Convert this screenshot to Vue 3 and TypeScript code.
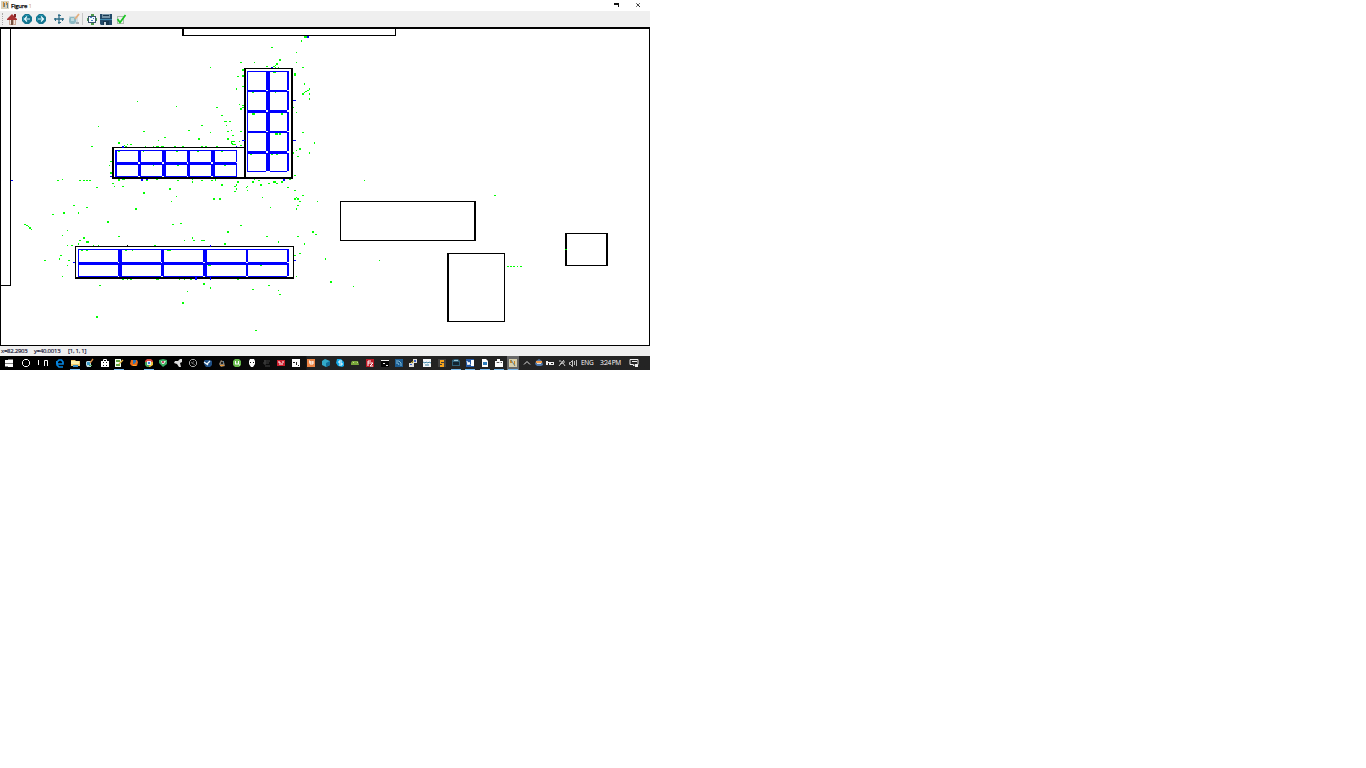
<script setup lang="ts">
interface Shape { d: string; c: string; w?: number }
interface Glyph { x: number; s: Shape[]; open?: boolean; active?: boolean }

const f = (c: string, d: string): Shape => ({ c, d })
const l = (c: string, d: string, w = 1): Shape => ({ c, d, w })

const parse = (text: string): number[][] =>
  text.trim().split(/\s+/).map((item) => {
    const [x, y, w = 1, h = 1] = item.split(',').map(Number)
    return [x, y, w, h]
  })
const toPath = (text: string): string =>
  parse(text).map(([x, y, w, h]) => `M${x} ${y}h${w}v${h}h${-w}z`).join('')

const walls = toPath(`
0,27,650,2 0,27,1,319 649,27,1,319 0,345,650,1
10,29,1,257 0,285,11,1
182,28,2,8 182,35,214,1 395,28,1,8
244,68,2,111 291,68,2,111 244,68,49,1 112,177,181,2
112,147,2,32 112,147,133,1
75,246,1,33 75,246,219,1 75,277,219,2 293,246,1,33 127,245
340,201,1,40 340,201,136,1 474,201,2,40 340,240,136,1
447,253,2,69 447,253,58,1 504,253,1,69 447,321,58,1
565,233,2,33 565,233,43,1 606,233,2,33 565,265,43,1`)

const cells = toPath(`
247,71,1,101 247,71,42,1 266,71,4,100 287,71,2,100 247,90,42,2 247,110,42,3 247,131,42,2 247,151,42,3 247,171,42,1
115,150,2,27 115,150,122,1 138,150,3,27 162,150,4,27 187,150,3,27 211,150,4,27 236,150,1,27 115,162,122,3 115,176,122,1
78,249,1,28 78,249,211,1 118,249,4,28 161,249,3,28 203,249,4,28 246,249,2,28 287,249,2,28 78,262,211,3 78,276,211,1
307,36,2,2 271,67,2,1 293,100,3,1 242,140,3,1 293,140,3,1 236,146,1,1 122,146,2,2 110,176,2,1
141,179,2,2 146,179,2,1 283,179,2,2 11,180,2,1 294,260,2,1 210,245,1,2 195,277,2,3 210,277,1,3 73,262,2,1`)

const joints = toPath(`
266,90,2,1 287,90,2,1 266,110,2,2 287,110,2,2 266,131,2,1 287,131,2,1 266,151,2,2 287,151,2,2 266,171,4,1 287,171,2,1
138,162,2,2 162,162,2,2 187,162,1,2 211,162,2,2 236,162,1,1 138,176,2,1 162,176,2,1 187,176,1,1 211,176,2,1
118,262,1,1 161,262,1,1 203,262,2,1 246,262,2,1 287,262,2,1 118,276,1,1 161,276,2,1 203,276,2,1 246,276,2,1 287,276,2,1`)

const points = toPath(`
304,36,3,2 301,40,1,2 271,47,2 296,52 279,59,2,2 240,62,2 254,62 296,62 276,63,2,2 275,65 273,66,2 266,66,2 275,67 278,67 210,67 302,67,2
242,69,2,2 273,72,3 294,73,2,3 237,76,2 242,75,2,2 304,83,1,2 242,86,2 236,88,1,2 309,88,1,2 307,90,2 305,91,2 304,92 302,93,2,2 309,93,1,2 309,98,1,2
252,92,2 275,92 239,104 242,105,2 242,107,2 240,108,2,2 293,107 296,112 216,107,2 252,113,3,2 281,113,2,2 221,115,2 224,121,3 229,121,2 201,125,2
226,125 188,130,2 227,131,2 231,130 240,131,2 210,132 302,132,2 137,101 176,106 98,126 91,146,2 143,131,2 158,140 164,137,2 118,142,2,2
127,144 130,144,2 124,145 125,146,2 145,146 153,146 156,146,3 161,146,3 174,146,2 182,146,2 201,146,2 205,146,2 216,146,2 198,138,2,2 227,138,2,2
232,135,2 231,141,1,2 232,141,3 231,143,2 232,144,4 239,141 240,145,2 314,142,1,2 309,152,1,2 299,148,2,2 293,152,1,2 296,150 297,156,2
275,133,3,2 279,133,2,2 250,154,2 271,154,2 276,154,2 221,151,2 224,165,2 294,175,2 289,179,2 211,180,2 215,179,1,2 221,184,2,2
237,181,2,2 236,184,1,2 234,186,2 236,188,1,2 234,191,2 254,179 258,180,2 252,181,2,2 260,184,2,2 247,186 246,187 247,190 268,183,2
273,181,3,2 276,183,2 281,181,2,2 287,187,2 294,190,2 302,195,2 294,198,2,2 296,197 297,198,2,2 299,201,2 297,205,2 296,208,1,2 317,201
364,180 262,197 270,207 213,198,2,2 219,198,2,2 110,161,2 109,165 110,172,2,2 118,151,2 143,151 176,151,2 197,151,2 153,165 177,165,2
57,180,2 62,179 79,180,2 83,180,2 86,180,2 89,180,2 118,179,2,2 122,179,3 146,180,2 156,179,2 112,183,2 96,187,2 114,186 122,186,2
143,192,2,2 169,188,2,2 176,196 171,201 177,180,2 192,179 192,181,1,2 201,180,2 240,225,2 227,231,2,2 297,236,2 266,236,2 278,241,1,2
304,243,1,2 312,231,2,2 315,234,2 299,253,2 294,255,2 325,258,1,2 296,276 172,224,2 180,223,2 184,240 192,237,1,2 193,240,2 201,240,4
224,243,2,2 167,250,4 208,265,3 260,265,2 179,279 184,279 190,279,2 237,279,2 203,283,2,2 210,287,1,2 187,291 182,302,2,2 252,289,2
268,285,2 278,290 279,294,2 255,330,2 135,208,2,2 107,221,2,2 118,236,2 73,205,2 86,207,2 63,212,2,2 78,212,1,2 52,214,2
24,224,2 26,225,2 28,226 29,227,2,2 31,229 67,230 62,235 83,237,2,2 79,240,2 86,241,3,2 78,243,1,2 67,245 71,245,2 93,245 98,245 154,245,2
81,250,2 86,250,2 125,250,2 132,250 44,260,2 60,255,2 59,258,1,2 68,260,2 67,265 62,276 99,285,2 96,316,2,2 122,279,2 127,279 130,279,2 156,279,3
494,195,2 379,260 330,281,2,2 353,286 507,266,2 510,266,2 513,266,2 517,266 520,266,2 565,249,2`)

const arrowDisc = (x: number, dir: string): Glyph => ({
  x,
  s: [f('#14758f', 'M4 1h4l3 3v4l-3 3H4L1 8V4z'), f('#2494ae', 'M4 2h4v1H4zM2 4h1v4H2z'), l('#e6fbff', dir, 1.2)],
})
const tools: Glyph[] = [
  { x: 12, s: [f('#c9a694', 'M3 6h7v6H3z'), f('#a83232', 'M6 1l5 5v1H1V6z'), f('#812525', 'M8 1h2v3H8z'), f('#f0e4dc', 'M4 7h1v4H4zM8 7h1v4H8z'), f('#76513f', 'M5 7h2v5H5z')] },
  arrowDisc(26.5, 'M9 6H4M6 3.500L3.500 6 6 8.500'),
  arrowDisc(41, 'M3 6h5M6 3.500l2.500 2.500L6 8.500'),
  { x: 59, s: [l('#2f6d88', 'M6 1v10M1 6h10', 1.3), f('#2f6d88', 'M5 2h3v1H5zM5 9h3v1H5zM2 5h1v3H2zM9 5h1v3H9z')] },
  { x: 74, s: [f('#d2dce0', 'M1 3h9v8H1z'), f('#8dbac4', 'M2 4h4l2 2v3L6 11H3L1 9V6z'), f('#bddce1', 'M3 5h3v3H3z'), l('#e3ad7c', 'M7 6l4-5', 1.8), f('#a4acb0', 'M8 9h3v2H8z')] },
  { x: 91.5, s: [f('#39566e', 'M2 3h8v7H2z'), f('#f6fbff', 'M3 4h6v5H3z'), f('#457cc5', 'M4 4h2v1H4zM7 5h1v1H7zM5 7h2v1H5z'), f('#4d994b', 'M5 1h3v2H5zM5 10h3v2H5zM1 5h1v3H1zM10 5h1v3h-1z')] },
  { x: 106, s: [f('#234a68', 'M0 1h12v11H1L0 11z'), f('#7794a6', 'M2 1h8v4H2z'), f('#17374e', 'M3 2h6v1H3zM3 8h6v4H3z'), f('#c8d5dc', 'M4 9h2v3H4z'), f('#408bb1', 'M0 6h12v1H0z')] },
  { x: 121, s: [f('#aeb9af', 'M2 3h7v8H2z'), f('#edf1ec', 'M3 4h5v6H3z'), l('#18c620', 'M2.5 6L5 9.5 10.5 2', 1.7)] },
]

const W = '#ffffff'
const apps: Glyph[] = [
  { x: 8.5, s: [f(W, 'M2 3h3v3H2zM5 2.500h5V6H5zM2 6.500h3v3H2zM5 6.500h5V10H5z')] },
  { x: 26, s: [l(W, 'M4.5 2.5h3l2 2v3l-2 2h-3l-2-2v-3z')] },
  { x: 43, s: [l(W, 'M1.5 3v5M7.5 9V3.5h3V9')] },
  { x: 60, s: [l('#0685e1', 'M3 7h6V5L7.500 3H5L3 5v3l2 2h4', 1.7), f('#0685e1', 'M2 4h2v3H2z')] },
  { x: 75, open: true, s: [f('#efc768', 'M2 3h4l1 1h4v5H2z'), f('#fff0a8', 'M2 4h8v3H2z'), f('#338cc4', 'M4 8h5v2H4z')] },
  { x: 89.5, s: [f('#b9dce4', 'M3 4h4v6H3L2 8V5z'), f('#3f9dcd', 'M3 5h3v3H3z'), l('#d7893f', 'M6 6l3-4', 1.3), f('#50a559', 'M5 8h3v1H5z')] },
  { x: 104.500, s: [f(W, 'M2 4h8v6H2z'), l(W, 'M4.500 4V2.500h3V4'), f('#111', 'M4 5h1v1H4zM7 5h1v1H7zM4 8h1v1H4zM7 8h1v1H7z')] },
  { x: 118.500, open: true, s: [f('#f4fff0', 'M2 2h6v8H2z'), f('#66a741', 'M3 3h4v2H3zM3 7h4v2H3z'), l('#e9b641', 'M6 7l4-4', 1.3)] },
  { x: 134, s: [f('#e66a18', 'M3 3h6l1 2-1 4H4L2 7z'), f('#2475ba', 'M5 3h3v2L6 7H5z'), f('#ffae31', 'M5 8h3v1H5z')] },
  { x: 148.500, open: true, s: [f('#d9483b', 'M4 2h4l2 2v2H2V4z'), f('#45a657', 'M2 5h3l2 5H4L2 8z'), f('#f3c63d', 'M7 5h3v3l-3 2H6z'), f('#e8eef8', 'M4 4h4v4H4z'), f('#3c83e1', 'M5 5h2v2H5z')] },
  { x: 163, s: [f('#39af62', 'M2 3l4-1 4 1v4l-4 3-4-4z'), f('#e5e9de', 'M4 4h5L7 7H5z'), f('#c15269', 'M5 4h2v2H5z')] },
  { x: 178, s: [f('#ddd', 'M3 4h3l2-2h2v3L8 6l1 4H7L5 7 2 6z')] },
  { x: 193, s: [l('#a7a9a8', 'M4.500 2.500h3l2 2v3l-2 2h-3l-2-2v-3z'), l('#777', 'M4 5l4 3M5 7l2-3', .8)] },
  { x: 207.500, s: [f('#1e4f85', 'M3 3h5l2 1v4l-2 2H4L2 7V4z'), l('#eef8ff', 'M5 7l3-3M2 5l4 3', 1.3)] },
  { x: 222, s: [f('#8d8170', 'M5 3l3 2 1 4-4 1-2-3z'), f('#e69430', 'M4 8h4v1H4z'), f('#567e9b', 'M7 4h1v2H7z'), f('#222', 'M5 5h2v2H5z')] },
  { x: 237, s: [f('#65b949', 'M4 2h4l2 2v4l-2 2H4L2 8V4z'), l(W, 'M4.500 4v3h3V4M8 8h1', 1.1)] },
  { x: 252, s: [f(W, 'M4 2h4l1 2v3L7 10H5L3 7V4z'), f('#111', 'M4 5h1v1H4zM7 5h1v1H7z')] },
  { x: 266.500, s: [l('#444', 'M3 4h6M2 6h6M4 9h5M4 3v5')] },
  { x: 281, s: [f('#c91f2d', 'M2 3h8v6H2z'), l('#fff', 'M3 5h2v1M7 5h2M4 7h4')] },
  { x: 296, s: [f(W, 'M2 2h8v8H2z'), f('#222', 'M3 5h2v1H3zM6 5h1v3H6zM8 8h1v1H8z')] },
  { x: 311, s: [f('#ed8444', 'M2 2h8v8H2z'), l(W, 'M4 4h1v3h3V4M4 5h4')] },
  { x: 325.500, s: [f('#32a9c8', 'M5 2l5 2v4l-4 2-4-2V4z'), f('#126d97', 'M6 6l4-2v4l-4 2z')] },
  { x: 340, s: [f('#11a8e6', 'M3 2h4l3 3v4L8 10 4 9 2 6z'), l(W, 'M8 4H5v2h3v2H5')] },
  { x: 355, s: [f('#79a73b', 'M3 4h6l1 4H2V6z'), f('#c0db91', 'M4 5h1v1H4zM8 5h1v1H8z')] },
  { x: 370, s: [f('#bb1825', 'M2 2h8v8H2z'), l(W, 'M4 9V4h3M4 6h2M6 6h3L6 9h3')] },
  { x: 384.500, s: [f('#050505', 'M2 3h8v7H2z'), f('#eee', 'M2 3h8v1H2zM4 6h2v1H4zM7 8h2v1H7z')] },
  { x: 399, s: [f('#1c5c91', 'M2 2h8v8H2z'), l('#80bad6', 'M3 4h3l2 2v3M3 6h2l1 2')] },
  { x: 413, s: [f('#dedede', 'M6 2h4v4H6zM2 6h5v4H2z'), f('#3d62c6', 'M7 3h2v2H7zM3 7h2v1H3z'), l('#efd446', 'M7 4L4 6')] },
  { x: 427, s: [f('#f5f8fa', 'M2 2h8v8H2z'), l('#3d83a5', 'M2 5l2 1 1-1 2 1 1-1 2 1M4 8h4')] },
  { x: 441.500, s: [f('#3f3f3f', 'M2 2h8v8H2z'), f('#f5a21b', 'M4 3h4v2H5v1h3v4H4V8h2V7H4z')] },
  { x: 455.500, open: true, s: [f('#2f6078', 'M2 3l3-1h3l2 2v5H2z'), f('#9bc5d8', 'M4 3h4v1H4z'), f('#142532', 'M3 5h6v3H3z')] },
  { x: 470, open: true, s: [f('#2458a3', 'M2 2h8v8H2z'), f(W, 'M7 3h3v6H7z'), l(W, 'M3 4l1 4 1-3 1 3')] },
  { x: 485, open: true, s: [f(W, 'M3 2h4l2 2v6H3z'), f('#317ebd', 'M4 5h4v3H4z')] },
  { x: 499, open: true, s: [f(W, 'M2 2h8v8H2z'), f('#222', 'M2 2h2v2H2zM7 2h3v2H7zM3 6l2-1 2 1 2-1v1H3z')] },
  { x: 513, open: true, active: true, s: [f('#d8d0ad', 'M2 2h8v8H2z'), f('#c78628', 'M3 3h2v3H3zM7 4h1v5H7z'), l('#62869b', 'M4 3l4 6')] },
  { x: 527, s: [l('#ddd', 'M3 7.500l3-3 3 3')] },
  { x: 538.500, s: [f('#4d78ac', 'M3 4l3-2 3 2 1 4-2 1H4L2 7z'), f('#ef9c4c', 'M3 4h6v2H3z'), f('#ddd', 'M4 6h4v1H4z')] },
  { x: 550, s: [f('#eee', 'M2 4h2v4H2zM4 5h6v3H4z'), f('#222', 'M4 6h1v2H4zM7 6h2v1H7z')] },
  { x: 562, s: [l('#ccc', 'M3 9l5-6M5 5h4M4 7l3-1 2 3M3 4h2')] },
  { x: 573, s: [l('#ddd', 'M2.500 5.500h1l2-2v6l-2-2h-1z', .9), l('#bbb', 'M7.500 4v4M9.500 3v6')] },
]
const note: Shape[] = [l('#eee', 'M2 2.500h8v5H7L5.500 9V7.500H2zM4 4.500h5'), f('#eee', 'M7 8h3v2H7z')]
</script>

<template>
  <main class="window">
    <header class="titlebar">
      <svg class="logo" viewBox="0 0 8 8"><path fill="#d9d2bd" d="M0 0h8v8H0z"/><path fill="#d58b30" d="M2 1h1v5H2zM5 1h1v3H5z"/><path fill="#638398" d="M3 2h1v4H3zM6 2h1v5H6z"/></svg>
      <span class="name">Figure <i>1</i></span>
      <svg class="controls" viewBox="0 0 40 11" shape-rendering="crispEdges">
        <path d="M5 3h5v4H9V5H5z" fill="#111"/>
        <path d="M27 3h1v1h-1zM30 3h1v1h-1zM28 4h2v2h-2zM27 6h1v1h-1zM30 6h1v1h-1z" fill="#777"/>
        <path d="M28 4h1v1h-1zM29 5h1v1h-1zM30 6h1v1h-1z" fill="#222"/>
      </svg>
    </header>
    <nav class="toolbar">
      <i class="grip"></i><i class="divider"></i>
      <svg v-for="tool in tools" :key="tool.x" class="glyph" :style="{ left: tool.x - 6 + 'px' }" viewBox="0 0 12 12">
        <path v-for="(s, i) in tool.s" :key="i" :d="s.d" :fill="s.w ? 'none' : s.c" :stroke="s.w ? s.c : 'none'" :stroke-width="s.w"/>
      </svg>
    </nav>
    <svg class="plot" viewBox="0 27 650 319" shape-rendering="crispEdges">
      <path :d="walls" fill="#000"/>
      <path :d="cells" fill="#00f"/>
      <path :d="joints" fill="#fff"/>
      <path :d="points" fill="#0f0"/>
    </svg>
    <footer class="status"><span>x=82.2903</span><span>y=40.0013</span><span>[1, 1, 1]</span></footer>
    <div class="taskbar">
      <template v-for="app in apps" :key="app.x">
        <i v-if="app.active" class="active" :style="{ left: app.x - 6 + 'px' }"></i>
        <svg class="glyph" :style="{ left: app.x - 6 + 'px' }" viewBox="0 0 12 12">
          <path v-for="(s, i) in app.s" :key="i" :d="s.d" :fill="s.w ? 'none' : s.c" :stroke="s.w ? s.c : 'none'" :stroke-width="s.w"/>
        </svg>
        <i v-if="app.open" class="open" :style="{ left: app.x - 5 + 'px' }"></i>
      </template>
      <span class="tray language">ENG</span><span class="tray clock">3:24 PM</span>
      <svg class="glyph note" viewBox="0 0 12 12"><path v-for="(s, i) in note" :key="i" :d="s.d" :fill="s.w ? 'none' : s.c" :stroke="s.w ? s.c : 'none'" :stroke-width="s.w"/></svg>
    </div>
  </main>
</template>

<style scoped>
.window { width: 650px; height: 370px; display: flex; flex-direction: column; font-family: "Open Sans", "Noto Sans", sans-serif; background: #fff; color: #000; overflow: hidden; }
.titlebar { height: 11px; flex: none; display: flex; align-items: center; }
.logo { width: 8px; height: 8px; margin-left: 1px; margin-top: -1px; }
.name { margin-left: 2px; font-size: 6px; line-height: 12px; height: 11px; letter-spacing: -.2px; -webkit-text-stroke: .25px #000; }
.name i { color: #cfa25e; font-style: normal; -webkit-text-stroke: 0; }
.controls { width: 40px; height: 11px; margin-left: auto; margin-right: 1px; }
.toolbar { position: relative; height: 16px; flex: none; background: #efefef; }
.grip { position: absolute; left: 2px; top: 2px; height: 12px; border-left: 1px dotted #aaa; }
.divider { position: absolute; left: 82px; top: 2px; height: 12px; border-left: 1px solid #c9c9c9; }
.glyph { position: absolute; width: 12px; height: 12px; top: 2px; overflow: visible; }
.plot { display: block; width: 650px; height: 319px; flex: none; }
.status { height: 10px; flex: none; background: #efefef; display: flex; font-size: 6px; line-height: 11px; letter-spacing: -.25px; color: #101030; -webkit-text-stroke: .15px #101030; }
.status span { width: 34px; white-space: nowrap; }
.status span:first-child { padding-left: 1px; width: 33px; }
.taskbar { position: relative; height: 14px; flex: none; background: linear-gradient(90deg, #000 0 180px, #101010 306px, #222 307px, #242424); }
.taskbar .glyph { top: 1px; }
.open { position: absolute; bottom: 0; height: 1px; width: 10px; background: #76b9ed; }
.active { position: absolute; top: 0; height: 14px; width: 12px; background: #686868; }
.tray { position: absolute; top: 0; font-size: 6.5px; line-height: 14px; color: #fff; white-space: nowrap; }
.language { left: 581px; letter-spacing: -.3px; }
.clock { left: 600px; letter-spacing: -.55px; }
.note { left: 628px; }
</style>

<style>
body { background: #fff; }
</style>
